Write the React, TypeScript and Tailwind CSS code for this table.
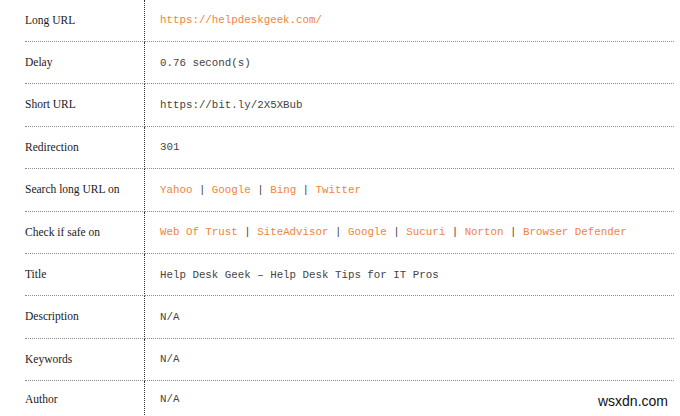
import React from "react";

type Part = { text: string; link?: boolean };

interface Row {
  label: string;
  parts: Part[];
}

const links = (names: string[]): Part[] =>
  names.flatMap((name, i) =>
    i === 0 ? [{ text: name, link: true }] : [{ text: " | " }, { text: name, link: true }]
  );

const rows: Row[] = [
  { label: "Long URL", parts: [{ text: "https://helpdeskgeek.com/", link: true }] },
  { label: "Delay", parts: [{ text: "0.76 second(s)" }] },
  { label: "Short URL", parts: [{ text: "https://bit.ly/2X5XBub" }] },
  { label: "Redirection", parts: [{ text: "301" }] },
  { label: "Search long URL on", parts: links(["Yahoo", "Google", "Bing", "Twitter"]) },
  {
    label: "Check if safe on",
    parts: links(["Web Of Trust", "SiteAdvisor", "Google", "Sucuri", "Norton", "Browser Defender"]),
  },
  { label: "Title", parts: [{ text: "Help Desk Geek – Help Desk Tips for IT Pros" }] },
  { label: "Description", parts: [{ text: "N/A" }] },
  { label: "Keywords", parts: [{ text: "N/A" }] },
  { label: "Author", parts: [{ text: "N/A" }] },
];

const App: React.FC = () => {
  return (
    <div className="relative w-[680px] h-[416px] overflow-hidden bg-white">
      <table className="ml-[25px] w-[649px] border-separate border-spacing-0">
        <tbody>
          {rows.map((row, i) => {
            const last = i === rows.length - 1;
            const height = i === 0 ? "h-[42px]" : last ? "h-[50px] align-top pt-[10px]" : "h-[42.4px]";
            const bottom = last ? "" : "border-b border-dotted border-b-[#8c8c8c]";
            return (
              <tr key={row.label}>
                <td
                  className={`w-[120px] p-0 ${height} ${bottom} border-r border-dotted border-r-[#333] font-['Liberation_Serif',serif] text-[11.5px] text-[#1a1a1a] whitespace-nowrap`}
                >
                  {row.label}
                </td>
                <td
                  className={`p-0 pl-[15px] ${height} ${bottom} font-['Liberation_Mono',monospace] text-[10.8px] text-[#444] whitespace-pre`}
                >
                  {row.parts.map((p, j) => (
                    <span key={j} className={p.link ? "text-[#f0843a]" : ""}>
                      {p.text}
                    </span>
                  ))}
                </td>
              </tr>
            );
          })}
        </tbody>
      </table>
      <div className="absolute right-[12px] bottom-[4px] font-['Liberation_Sans',sans-serif] text-[14px] text-[#111]">
        wsxdn.com
      </div>
    </div>
  );
};

export default App;
